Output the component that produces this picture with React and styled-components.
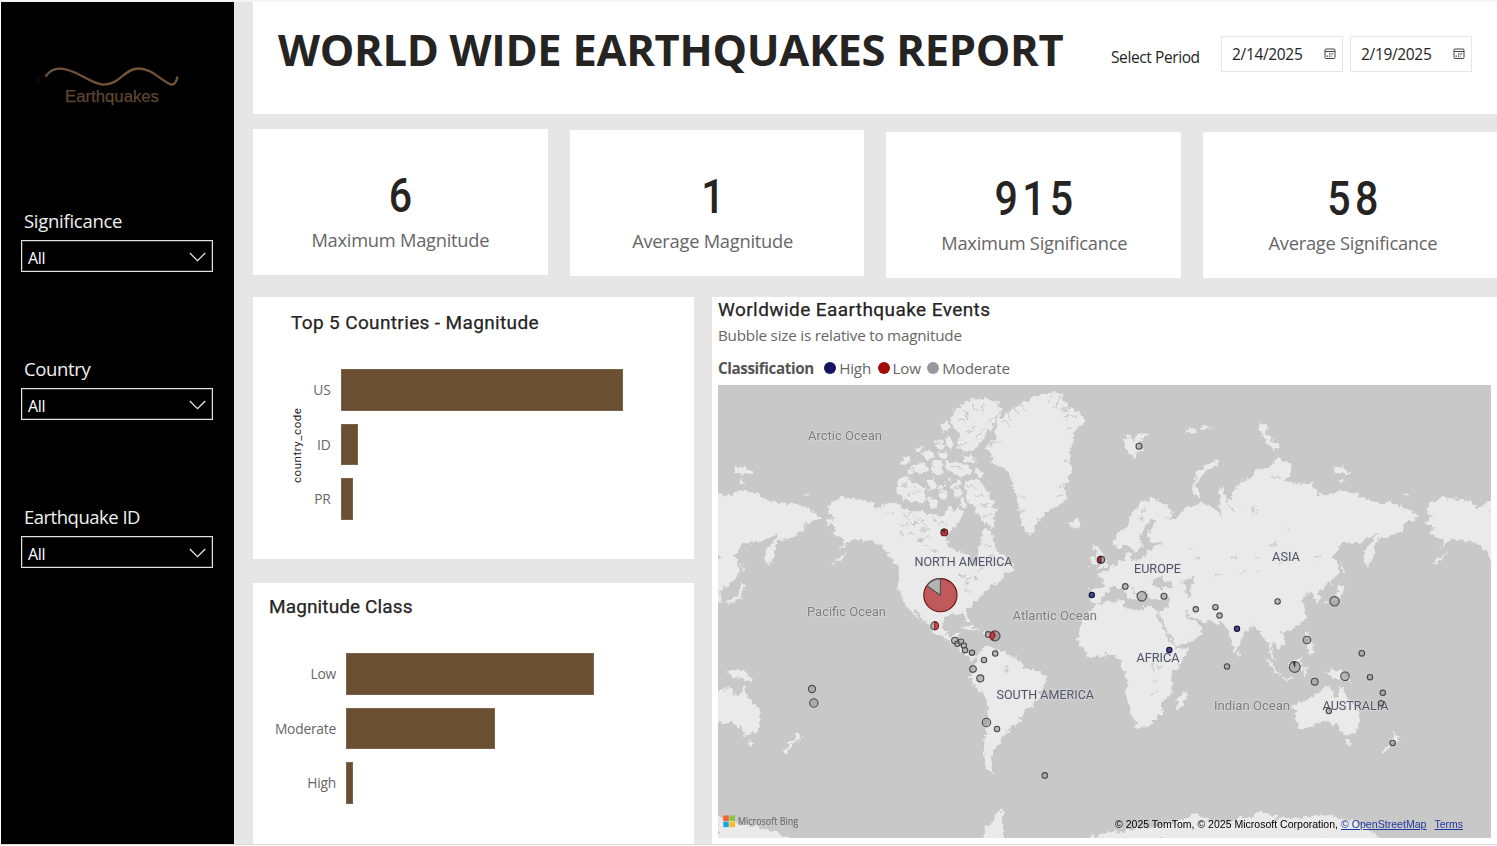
import React from "react";
import styled, { createGlobalStyle } from "styled-components";

const GlobalStyle = createGlobalStyle`
  * { box-sizing: border-box; }
  html, body { margin: 0; padding: 0; background: #fff; }
  body { width: 1497px; height: 846px; overflow: hidden; font-family: "Open Sans", "Noto Sans", sans-serif; color: #252423; }
`;

const Page = styled.div`
  display: flex;
  width: 1497px;
  height: 845px;
  padding-left: 1px;
  border-top: 2px solid #f4f4f4;
  border-bottom: 1px solid #d9d9d9;
  background: #e6e6e6;
  box-shadow: inset 1px 0 0 #fff;
`;

const Sidebar = styled.aside`
  width: 233px;
  height: 842px;
  flex: none;
  background: #000;
  padding: 61px 0 0 19.5px;
`;

const Logo = styled.svg`
  display: block;
  width: 150px;
  height: 45px;
  margin-left: 16.5px;
`;

const Filters = styled.div`
  display: flex;
  flex-direction: column;
  gap: 86px;
  padding-top: 102px;
`;

const Filter = styled.label`
  display: block;
  height: 62px;
`;

const FilterLabel = styled.div`
  height: 30px;
  padding-left: 3.5px;
  font-size: 18.5px;
  line-height: 22px;
  letter-spacing: ${(p) => p.$spacing}px;
  color: #f0f0f0;
`;

const Select = styled.div`
  display: flex;
  align-items: center;
  justify-content: space-between;
  width: 192px;
  height: 32px;
  padding: 4px 6px 0 6.5px;
  border: 1px solid #e4e4e4;
  outline: 1px solid #333;
  outline-offset: -2px;
  color: #fff;
  font-size: 16px;
  letter-spacing: -0.3px;
  svg { width: 17px; height: 10px; margin-top: -2px; }
`;

const Main = styled.main`
  flex: 1;
  display: flex;
  flex-direction: column;
  padding-left: 19px;
`;

const Header = styled.header`
  display: flex;
  align-items: flex-start;
  height: 112px;
  flex: none;
  background: #fff;
  padding-left: 25px;
`;

const Title = styled.h1`
  width: 833px;
  margin: 16px 0 0;
  font-size: 43.5px;
  line-height: 63px;
  font-weight: 700;
  white-space: nowrap;
  letter-spacing: -0.31px;
`;

const PeriodLabel = styled.div`
  width: 110px;
  margin-top: 44px;
  font-size: 15.5px;
  line-height: 22px;
  letter-spacing: -0.4px;
`;

const DateField = styled.div`
  display: flex;
  align-items: center;
  justify-content: space-between;
  width: 122px;
  height: 36px;
  margin: 34px 7px 0 0;
  padding: 0 6px 0 10px;
  border: 1px solid #e6e6e6;
  font-size: 15.5px;
  letter-spacing: -0.33px;
  svg { width: 12px; height: 12px; margin-top: -1px; }
`;

const Cards = styled.section`
  display: flex;
  gap: 22px;
  height: 183px;
  padding-top: 15px;
`;

const Card = styled.div`
  width: 294.7px;
  height: 146px;
  flex: none;
  margin-top: ${(p) => p.$drop}px;
  padding-right: ${(p) => (p.$shift < 0 ? -2 * p.$shift : 0)}px;
  padding-left: ${(p) => (p.$shift > 0 ? 2 * p.$shift : 0)}px;
  background: #fff;
  text-align: center;
`;

const CardValue = styled.div`
  height: 58px;
  margin-top: 38px;
  font-family: Roboto, sans-serif;
  font-weight: 500;
  font-size: 49px;
  line-height: 58px;
  letter-spacing: 5px;
  text-indent: 5px;
  transform: scaleX(0.84);
`;

const CardLabel = styled.div`
  margin-top: 2px;
  color: #666;
  font-size: 18.3px;
  line-height: 26px;
  letter-spacing: -0.25px;
`;

const Panels = styled.section`
  display: flex;
  gap: 18px;
  height: 547px;
`;

const ChartColumn = styled.div`
  display: flex;
  flex-direction: column;
  gap: 24px;
  width: 441px;
`;

const ChartPanel = styled.div`
  height: ${(p) => p.$height}px;
  padding: ${(p) => p.$padding};
  background: #fff;
`;

const PanelTitle = styled.h2`
  margin: 0;
  font-family: Roboto, sans-serif;
  font-weight: 400;
  font-size: 19px;
  line-height: 24px;
  letter-spacing: ${(p) => p.$spacing};
  white-space: nowrap;
  -webkit-text-stroke: 0.25px #252423;
`;

const Plot = styled.div`
  display: flex;
  padding-top: ${(p) => p.$top}px;
`;

const AxisTitle = styled.div`
  width: 14px;
  height: 152px;
  margin-left: -1px;
  text-align: center;
  writing-mode: vertical-rl;
  transform: rotate(180deg);
  font-family: Roboto, sans-serif;
  font-size: 11.5px;
  line-height: 14px;
  letter-spacing: 0.55px;
`;

const Bars = styled.div`
  display: flex;
  flex-direction: column;
  gap: 13px;
`;

const BarRow = styled.div`
  display: flex;
  align-items: center;
  height: 41.5px;
`;

const BarLabel = styled.div`
  width: ${(p) => p.$width}px;
  padding-right: 10px;
  text-align: right;
  color: #666;
  font-size: 13.8px;
  letter-spacing: -0.22px;
`;

const Bar = styled.div`
  height: 41.5px;
  background: #6b4f33;
  box-shadow: inset 0 0 0 1px #7d6449;
`;

const MapPanel = styled.div`
  width: 785px;
  height: 547px;
  padding: 1px 0 0 6px;
  background: #fff;
`;

const MapSubtitle = styled.div`
  height: 27px;
  color: #666;
  font-size: 15.2px;
  line-height: 27px;
  letter-spacing: -0.2px;
`;

const Legend = styled.div`
  display: flex;
  align-items: center;
  height: 36px;
  padding-top: 1px;
  color: #666;
  font-size: 15.2px;
  letter-spacing: -0.2px;
  b { margin-right: 10.5px; color: #555; letter-spacing: -0.4px; }
`;

const LegendItem = styled.span`
  display: flex;
  align-items: center;
  gap: 3px;
  margin-right: 6.5px;
  &::before {
    content: "";
    width: 12px;
    height: 12px;
    border-radius: 50%;
    background: ${(p) => p.$color};
  }
`;

const MapSvg = styled.svg`
  display: block;
  width: 773px;
  height: 453px;
  background: #c8c8c8;
`;

const Calendar = () => (
  <svg viewBox="0 0 12 12" fill="none" stroke="#444">
    <rect x="1" y="1" width="10" height="9.5" rx="1" />
    <path d="M1 3.5H11" />
    <path d="M5 5.9H10M2.5 8.1H8" strokeDasharray="1.4 1" strokeWidth="1.2" />
  </svg>
);

const Chevron = () => (
  <svg viewBox="0 0 17 10" fill="none" stroke="#eee" strokeWidth="1.2">
    <path d="M.8 1L8.5 8.6L16.2 1" />
  </svg>
);

const LAND = [
  // North America
  "M828 507L833 502L840 498L851 498L863 500L871 502L878 508L884 505L892 502L899 504L905 510L915 512L925 513L935 514L943 518L947 510L951 506L954 513L960 512L960 520L955 528L948 533L946 540L950 547L957 551L965 553L971 558L973 565L977 565L978 557L977 550L981 543L984 535L983 528L990 532L995 544L1000 553L1012 564L1013 573L1004 573L1003 580L990 587L981 596L974 604L967 610L969 621L966 621L963 614L955 614L946 616L942 624L945 634L952 637L957 631L959 634L956 640L963 641L966 645L967 652L972 656L978 655L977 658L971 659L960 650L952 642L945 639L935 634L929 627L920 614L912 608L920 621L923 624L918 620L908 608L903 600L898 588L898 575L897 567L893 560L886 551L880 545L872 541L862 540L853 539L846 545L838 551L846 541L838 537L830 533L838 528L829 524L826 520L835 518L828 513Z",
  // Arctic islands
  "M898 478L906 477L915 484L925 489L926 500L915 503L905 500L897 492ZM901 462L907 456L912 460L905 466ZM916 447L922 446L921 453L915 453ZM910 467L923 462L929 470L920 475ZM934 440L943 441L945 448L937 449ZM930 462L941 460L942 475L934 473ZM946 461L958 462L970 467L972 475L958 476L948 471ZM938 487L944 483L946 500L939 499ZM951 483L959 480L963 495L955 499ZM950 424L955 410L965 402L978 398L996 401L1002 411L994 424L985 435L976 449L964 454L957 446L961 435ZM964 480L978 480L990 495L996 511L993 527L984 523L977 511L970 502L966 492ZM948 513L960 509L964 518L952 522Z",
  "M922 453L930 450L935 456L926 460ZM926 480L934 479L936 488L929 490ZM928 497L937 501L936 508L929 506ZM938 452L948 452L947 458L939 458ZM946 436L953 440L951 450L946 446ZM961 456L974 456L975 462L965 462ZM905 471L912 469L914 473L907 475ZM940 424L947 420L949 428L943 432ZM961 497L967 503L966 508L960 505ZM975 470L984 471L982 477L976 476ZM946 478L951 477L950 482Z",
  // Greenland, Iceland
  "M985 448L995 440L997 420L1013 408L1030 400L1047 392L1060 394L1068 406L1078 412L1085 419L1074 433L1070 453L1072 470L1064 488L1066 500L1052 510L1040 518L1033 534L1027 535L1022 523L1018 503L1012 483L1007 468L990 463L994 455ZM1069 524L1076 519L1082 522L1079 527L1072 528Z",
  // Svalbard, Franz Josef Land, Novaya Zemlya
  "M1123 440L1128 436L1133 442L1137 434L1149 432L1147 437L1138 441L1144 453L1139 452L1133 460L1128 450ZM1184 430L1194 428L1196 432L1186 433ZM1199 427L1208 425L1212 428L1203 430ZM1192 485L1196 475L1203 467L1212 461L1219 460L1217 465L1208 469L1202 476L1196 484L1200 496L1194 496Z",
  // Eurasia
  "M1113 543L1117 535L1127 525L1132 513L1140 503L1153 498L1162 502L1173 510L1170 518L1163 514L1170 520L1178 517L1184 508L1203 503L1213 507L1221 515L1219 490L1223 485L1227 505L1233 492L1240 483L1250 478L1255 470L1273 465L1278 455L1283 463L1292 463L1292 472L1283 483L1312 484L1318 493L1325 496L1340 490L1357 493L1363 498L1377 503L1393 503L1407 508L1420 517L1413 521L1403 523L1403 530L1390 537L1377 540L1375 546L1373 557L1367 567L1364 560L1365 550L1373 540L1378 533L1367 538L1358 543L1342 543L1332 557L1338 562L1338 573L1330 583L1318 592L1320 601L1316 604L1315 596L1308 593L1302 597L1305 611L1307 617L1300 625L1290 631L1282 632L1285 645L1280 649L1273 641L1271 652L1276 662L1271 657L1268 642L1263 637L1255 625L1243 633L1240 647L1234 652L1230 637L1226 626L1217 623L1200 621L1190 615L1184 610L1188 618L1195 622L1203 628L1200 637L1177 647L1170 635L1162 620L1158 611L1168 608L1170 598L1160 600L1150 598L1147 591L1142 590L1145 600L1140 600L1135 591L1128 585L1134 593L1137 598L1132 600L1122 588L1113 588L1106 592L1103 600L1097 604L1090 602L1090 588L1103 588L1104 578L1096 575L1108 570L1118 562L1125 560L1127 552L1132 553L1132 560L1145 558L1151 548L1163 543L1151 542L1148 535L1155 522L1151 519L1144 527L1139 537L1142 546L1135 553L1128 545L1117 548Z",
  // Britain and Ireland
  "M1094 545L1099 547L1101 554L1107 561L1108 567L1098 569L1102 562L1096 555ZM1091 559L1096 558L1096 564L1090 565Z",
  // Africa and Madagascar
  "M1095 606L1105 602L1122 600L1125 607L1138 612L1145 606L1157 610L1157 617L1162 627L1170 642L1177 649L1189 648L1183 660L1171 676L1173 692L1163 702L1163 710L1152 725L1137 728L1132 713L1126 697L1128 681L1122 670L1122 661L1113 655L1094 658L1087 653L1077 643L1080 628L1086 616ZM1187 690L1183 707L1178 709L1177 699L1183 694Z",
  // South America
  "M978 652L988 647L1003 652L1018 658L1023 667L1040 672L1047 678L1042 690L1036 703L1025 710L1017 724L1009 728L1010 734L1002 737L1000 744L994 748L991 767L995 776L986 768L984 753L985 733L988 710L987 697L978 690L970 677L974 668Z",
  // Caribbean
  "M960 627L968 625L980 631L974 631ZM984 632L993 633L990 636L984 635Z",
  // Southeast Asia and Japan
  "M1265 657L1272 663L1280 675L1276 674L1270 665ZM1281 677L1293 678L1292 680L1282 679ZM1288 664L1297 659L1301 655L1300 669L1292 672ZM1302 667L1309 665L1304 670L1307 677L1302 674ZM1306 632L1309 633L1308 641L1313 644L1314 654L1309 655L1307 645ZM1324 670L1333 670L1342 671L1353 682L1344 680L1333 678ZM1340 584L1346 585L1343 588L1341 597L1327 604L1324 603L1336 596ZM1341 562L1344 570L1342 573ZM1238 650L1240 655L1237 655Z",
  // Australia and New Zealand
  "M1294 705L1310 698L1320 690L1330 688L1332 694L1337 697L1341 684L1347 697L1358 709L1360 720L1353 734L1343 735L1337 726L1330 722L1317 723L1307 728L1298 728ZM1346 740L1352 741L1349 747L1346 744ZM1394 732L1400 736L1396 742L1391 743L1386 753L1382 752L1387 744L1394 739Z",
  // Bering Sea, Siberian islands and Aleutians
  "M1260 423L1267 425L1266 433L1271 439L1279 443L1279 450L1271 449L1264 438L1258 430ZM1333 468L1342 466L1346 471L1353 471L1351 474L1336 473ZM1340 479L1344 482L1340 485ZM1402 495L1406 492L1408 496ZM1430 566L1440 560L1448 550L1440 557Z",
];

const ANTARCTICA =
  "M718 816L728 822L750 826L768 830L785 836L790 840L718 840ZM983 840L985 827L992 824L996 814L1003 808L1003 840ZM1083 840L1100 834L1120 831L1160 826L1185 818L1195 812L1202 818L1225 823L1245 817L1263 812L1278 818L1305 817L1330 815L1357 823L1373 833L1386 840Z";

const LAKES =
  "M1152 585L1154 578L1161 577L1165 581L1172 583L1174 588L1163 588L1156 589ZM1184 580L1192 577L1194 583L1190 588L1193 598L1187 599ZM955 574L963 573L966 578L960 576ZM963 581L970 580L967 584ZM971 577L977 577L975 580ZM918 538L925 540L919 543ZM911 522L921 523L914 526ZM1157 664L1161 666L1159 670ZM1154 675L1156 683L1155 684Z";

const SPECKS =
  "M1188 549L1194 547M1196 560L1202 557M1250 510L1257 507M1252 513L1258 511M1228 505L1234 511M1270 476L1279 478M1285 528L1291 531M1268 547L1278 544M1255 555L1258 559M1279 564L1285 562M1240 573L1245 571M1215 576L1221 574M1314 558L1321 557M1230 558L1237 556M1258 572L1261 570M900 524L908 527M908 532L915 535M920 530L930 530M925 538L932 536M903 516L911 513M930 548L936 551M965 588L968 593M918 591L919 592M1105 653L1106 660M1004 668L1008 670M1153 665L1154 672M1150 693L1157 692";

const INLETS =
  "M956 419L967 423M962 410L970 418M972 404L976 412M985 404L982 413M966 432L977 427M976 438L984 429M988 421L997 417M957 447L968 442M900 486L908 484M907 495L916 491M914 486L920 493M934 445L940 443M951 466L962 468M940 491L945 489M953 489L961 487M968 486L978 489M975 496L985 496M978 506L988 504M984 517L993 514M1006 412L1011 421M1013 406L1018 416M1020 403L1024 411M1003 421L1009 425M1052 395L1049 404M1060 397L1055 408M1070 408L1058 411M1077 416L1062 417M1075 427L1068 429M1073 447L1066 448M1072 462L1065 461M1065 484L1058 487M1064 496L1056 498M995 440L1001 442M1018 497L1024 497M1020 512L1026 510M1146 507L1141 515M1137 515L1142 520M905 519L911 521M889 511L894 514M915 517L921 519M922 521L926 526M900 533L904 537M984 545L990 547M988 556L994 554M978 571L985 568M995 563L1001 565M922 546L928 545M939 524L945 523M932 519L938 521";

const LABELS = [
  [808, 440, "Arctic Ocean", 74, 0],
  [807, 616, "Pacific Ocean", 79, 0],
  [1012.5, 620, "Atlantic Ocean", 84.5, 0],
  [1214, 710, "Indian Ocean", 76, 0],
  [914.5, 566, "NORTH AMERICA", 98, 1],
  [996.5, 699, "SOUTH AMERICA", 97.5, 1],
  [1134, 573, "EUROPE", 47, 1],
  [1272, 561, "ASIA", 28, 1],
  [1136.5, 662, "AFRICA", 43, 1],
  [1322.5, 710, "AUSTRALIA", 66, 1],
];

const MODERATE = [
  [1139, 446.3, 3], [812, 689, 3.6], [813.8, 703, 4.2], [954.8, 640.4, 3.2], [957.4, 643.8, 2.7],
  [961, 641.8, 2.8], [963.8, 645.5, 2.7], [965, 650.2, 2.7], [972, 652.7, 2.7], [973, 669.1, 3.3],
  [980.3, 678.4, 3.5], [984, 660, 2.7], [995.2, 653.6, 2.7], [988.2, 634.4, 2.8], [986.5, 722.5, 4.2],
  [997, 729, 2.7], [1044.8, 775.4, 2.8], [1125.3, 586.4, 2.8], [1141.8, 596.3, 4.8], [1164, 596.3, 3],
  [1195.8, 609.3, 2.7], [1215.4, 607.2, 2.7], [1219.5, 615.6, 2.7], [1277.6, 601.5, 2.7], [1334.5, 601.3, 4.7],
  [1227, 666.5, 2.7], [1307, 640, 3.8], [1361.8, 653.3, 2.8], [1314.7, 681.7, 3.4], [1345, 676.3, 4.3],
  [1370, 677.2, 2.7], [1382.8, 692.8, 2.7], [1381, 703.2, 2.7], [1328.8, 711, 2.7], [1392.6, 743, 2.7],
];

const HIGH = [[1091.8, 595], [1237, 628.8], [1169.3, 650]];

const WorldMap = () => (
  <MapSvg viewBox="718 385 773 453">
    <defs>
      <filter id="coast" filterUnits="userSpaceOnUse" x="718" y="385" width="773" height="453" colorInterpolationFilters="sRGB">
        <feTurbulence type="fractalNoise" baseFrequency=".2" numOctaves="3" seed="4" />
        <feDisplacementMap in="SourceGraphic" scale="8.5" xChannelSelector="R" yChannelSelector="G" />
        <feGaussianBlur stdDeviation=".5" />
      </filter>
      <g id="world" fill="#eaeaea">
        {LAND.map((d) => <path key={d} d={d} />)}
        <path d={LAKES} fill="#c8c8c8" />
        <path d={SPECKS} fill="none" stroke="#cdcdcd" strokeWidth="1.5" />
        <path d={INLETS} fill="none" stroke="#cbcbcb" strokeWidth="1.3" />
      </g>
    </defs>
    <g filter="url(#coast)">
      <use href="#world" />
      <use href="#world" x="-598.6" />
      <use href="#world" x="598.6" />
      <path d={ANTARCTICA} fill="#eaeaea" />
    </g>
    <g fontFamily="Roboto, sans-serif" fontSize="13" paintOrder="stroke" stroke="#e0e0e0" strokeWidth="1.5" strokeOpacity=".6">
      {LABELS.map(([x, y, text, width, land]) => (
        <text key={text} x={x} y={y} textLength={width} lengthAdjust="spacingAndGlyphs" fill={land ? "#55546a" : "#7e7e7e"}>{text}</text>
      ))}
    </g>
    <g fill="#999" fillOpacity=".62" stroke="#4a4a4a" strokeWidth="1.1">
      {MODERATE.map(([x, y, r]) => <circle key={`${x}-${y}`} cx={x} cy={y} r={r} />)}
    </g>
    <g fill="#19196b" fillOpacity=".75" stroke="#12123f" strokeWidth="1.2">
      {HIGH.map(([x, y]) => <circle key={x} cx={x} cy={y} r="2.6" />)}
    </g>
    <g strokeWidth="1.1">
      <circle cx="940.4" cy="595.2" r="16.6" fill="#c05a5a" stroke="#6d1111" />
      <path d="M940.4 595.2L926.8 585.7A16.6 16.6 0 0 1 940.4 578.6Z" fill="#b3b3b3" stroke="#4d4d4d" />
      <circle cx="944.3" cy="532.4" r="3.4" fill="#b43a44" stroke="#6d1111" />
      <path d="M944.3 532.4L942 530A3.4 3.4 0 0 1 944.3 529Z" fill="#333" stroke="#333" />
      <circle cx="934.7" cy="625.8" r="3.9" fill="#b0b0b0" stroke="#4a4a4a" />
      <path d="M934.7 621.9A3.9 3.9 0 0 1 934.7 629.7Z" fill="#c44d52" stroke="#851b1e" />
      <circle cx="1101" cy="559.8" r="3.5" fill="#aaa" stroke="#383838" />
      <path d="M1101 556.3A3.5 3.5 0 0 0 1101 563.3Z" fill="#a83236" stroke="#401c20" />
      <circle cx="995" cy="635.9" r="5" fill="#999" stroke="#4d4d4d" />
      <path d="M995 635.9L993.3 631.2A5 5 0 0 0 992.3 640.1Z" fill="#c13f44" stroke="#851b1e" />
      <circle cx="1294.7" cy="667" r="5.4" fill="#b1b1b1" stroke="#4d4d4d" />
      <path d="M1294.7 667L1293.1 661.8A5.4 5.4 0 0 1 1295 661.6Z" fill="#444" stroke="#444" />
    </g>
    <g>
      <path fill="#f1652c" d="M723.3 815.5h5.5v5.5h-5.5z" />
      <path fill="#8ac541" d="M729.5 815.5h5.5v5.5h-5.5z" />
      <path fill="#16a5df" d="M723.3 821.6h5.5v5.5h-5.5z" />
      <path fill="#fdbd22" d="M729.5 821.6h5.5v5.5h-5.5z" />
    </g>
    <text x="738" y="825" fontFamily="Open Sans, sans-serif" fontSize="10" textLength="60" lengthAdjust="spacingAndGlyphs" fill="#707070" stroke="#707070" strokeWidth=".2">Microsoft Bing</text>
    <g fontFamily="Liberation Sans, Arial, sans-serif" fontSize="11">
      <text x="1115" y="828" textLength="223" lengthAdjust="spacingAndGlyphs">© 2025 TomTom, © 2025 Microsoft Corporation,</text>
      <g fill="#203a9c" textDecoration="underline">
        <text x="1341" y="828" textLength="85.5" lengthAdjust="spacingAndGlyphs">© OpenStreetMap</text>
        <text x="1434.5" y="828" textLength="28.5" lengthAdjust="spacingAndGlyphs">Terms</text>
      </g>
    </g>
  </MapSvg>
);

const BarList = ({ rows, labelWidth }) => (
  <Bars>
    {rows.map(([label, width]) => (
      <BarRow key={label}>
        <BarLabel $width={labelWidth}>{label}</BarLabel>
        <Bar style={{ width }} />
      </BarRow>
    ))}
  </Bars>
);

const CARDS = [
  ["6", "Maximum Magnitude", 0, 0],
  ["1", "Average Magnitude", 1, -4.5],
  ["915", "Maximum Significance", 3, 0.5],
  ["58", "Average Significance", 3, 2.5],
];

const FILTERS = [
  ["Significance", -0.28],
  ["Country", -0.35],
  ["Earthquake ID", -0.5],
];

export default function App() {
  return (
    <>
      <GlobalStyle />
      <Page>
        <Sidebar>
          <Logo viewBox="37 63 150 45" fill="none">
            <path d="M45.5 76.5C50 70 57 66.5 68 70C82 74 91 83.5 103 84.7C119 85 124 69 138 68.5C152 68 162 82 172 84.7C175 84.7 177 80 177.5 76.5" stroke="#735439" strokeWidth="2.3" />
            <path d="M38.5 77v5" stroke="#211911" />
            <text x="65" y="102.3" fontFamily="Liberation Sans, Arial, sans-serif" fontSize="16.5" textLength="94" lengthAdjust="spacingAndGlyphs" fill="#5f462f" stroke="#5f462f" strokeWidth=".25">Earthquakes</text>
          </Logo>
          <Filters>
            {FILTERS.map(([name, spacing]) => (
              <Filter key={name}>
                <FilterLabel $spacing={spacing}>{name}</FilterLabel>
                <Select>All<Chevron /></Select>
              </Filter>
            ))}
          </Filters>
        </Sidebar>
        <Main>
          <Header>
            <Title>WORLD WIDE EARTHQUAKES REPORT</Title>
            <PeriodLabel>Select Period</PeriodLabel>
            <DateField>2/14/2025<Calendar /></DateField>
            <DateField>2/19/2025<Calendar /></DateField>
          </Header>
          <Cards>
            {CARDS.map(([value, label, drop, shift]) => (
              <Card key={label} $drop={drop} $shift={shift}>
                <CardValue>{value}</CardValue>
                <CardLabel>{label}</CardLabel>
              </Card>
            ))}
          </Cards>
          <Panels>
            <ChartColumn>
              <ChartPanel $height={262} $padding="14px 0 0 38px">
                <PanelTitle $spacing="0.36px">Top 5 Countries - Magnitude</PanelTitle>
                <Plot $top={34}>
                  <AxisTitle>country_code</AxisTitle>
                  <BarList labelWidth={36.5} rows={[["US", 282], ["ID", 17.5], ["PR", 12.5]]} />
                </Plot>
              </ChartPanel>
              <ChartPanel $height={261} $padding="12px 0 0 16px">
                <PanelTitle $spacing="0.12px">Magnitude Class</PanelTitle>
                <Plot $top={34}>
                  <BarList labelWidth={77} rows={[["Low", 248], ["Moderate", 149], ["High", 7]]} />
                </Plot>
              </ChartPanel>
            </ChartColumn>
            <MapPanel>
              <PanelTitle $spacing="0.42px">Worldwide Eaarthquake Events</PanelTitle>
              <MapSubtitle>Bubble size is relative to magnitude</MapSubtitle>
              <Legend>
                <b>Classification</b>
                <LegendItem $color="#15135f">High</LegendItem>
                <LegendItem $color="#a30a0a">Low</LegendItem>
                <LegendItem $color="#999">Moderate</LegendItem>
              </Legend>
              <WorldMap />
            </MapPanel>
          </Panels>
        </Main>
      </Page>
    </>
  );
}
